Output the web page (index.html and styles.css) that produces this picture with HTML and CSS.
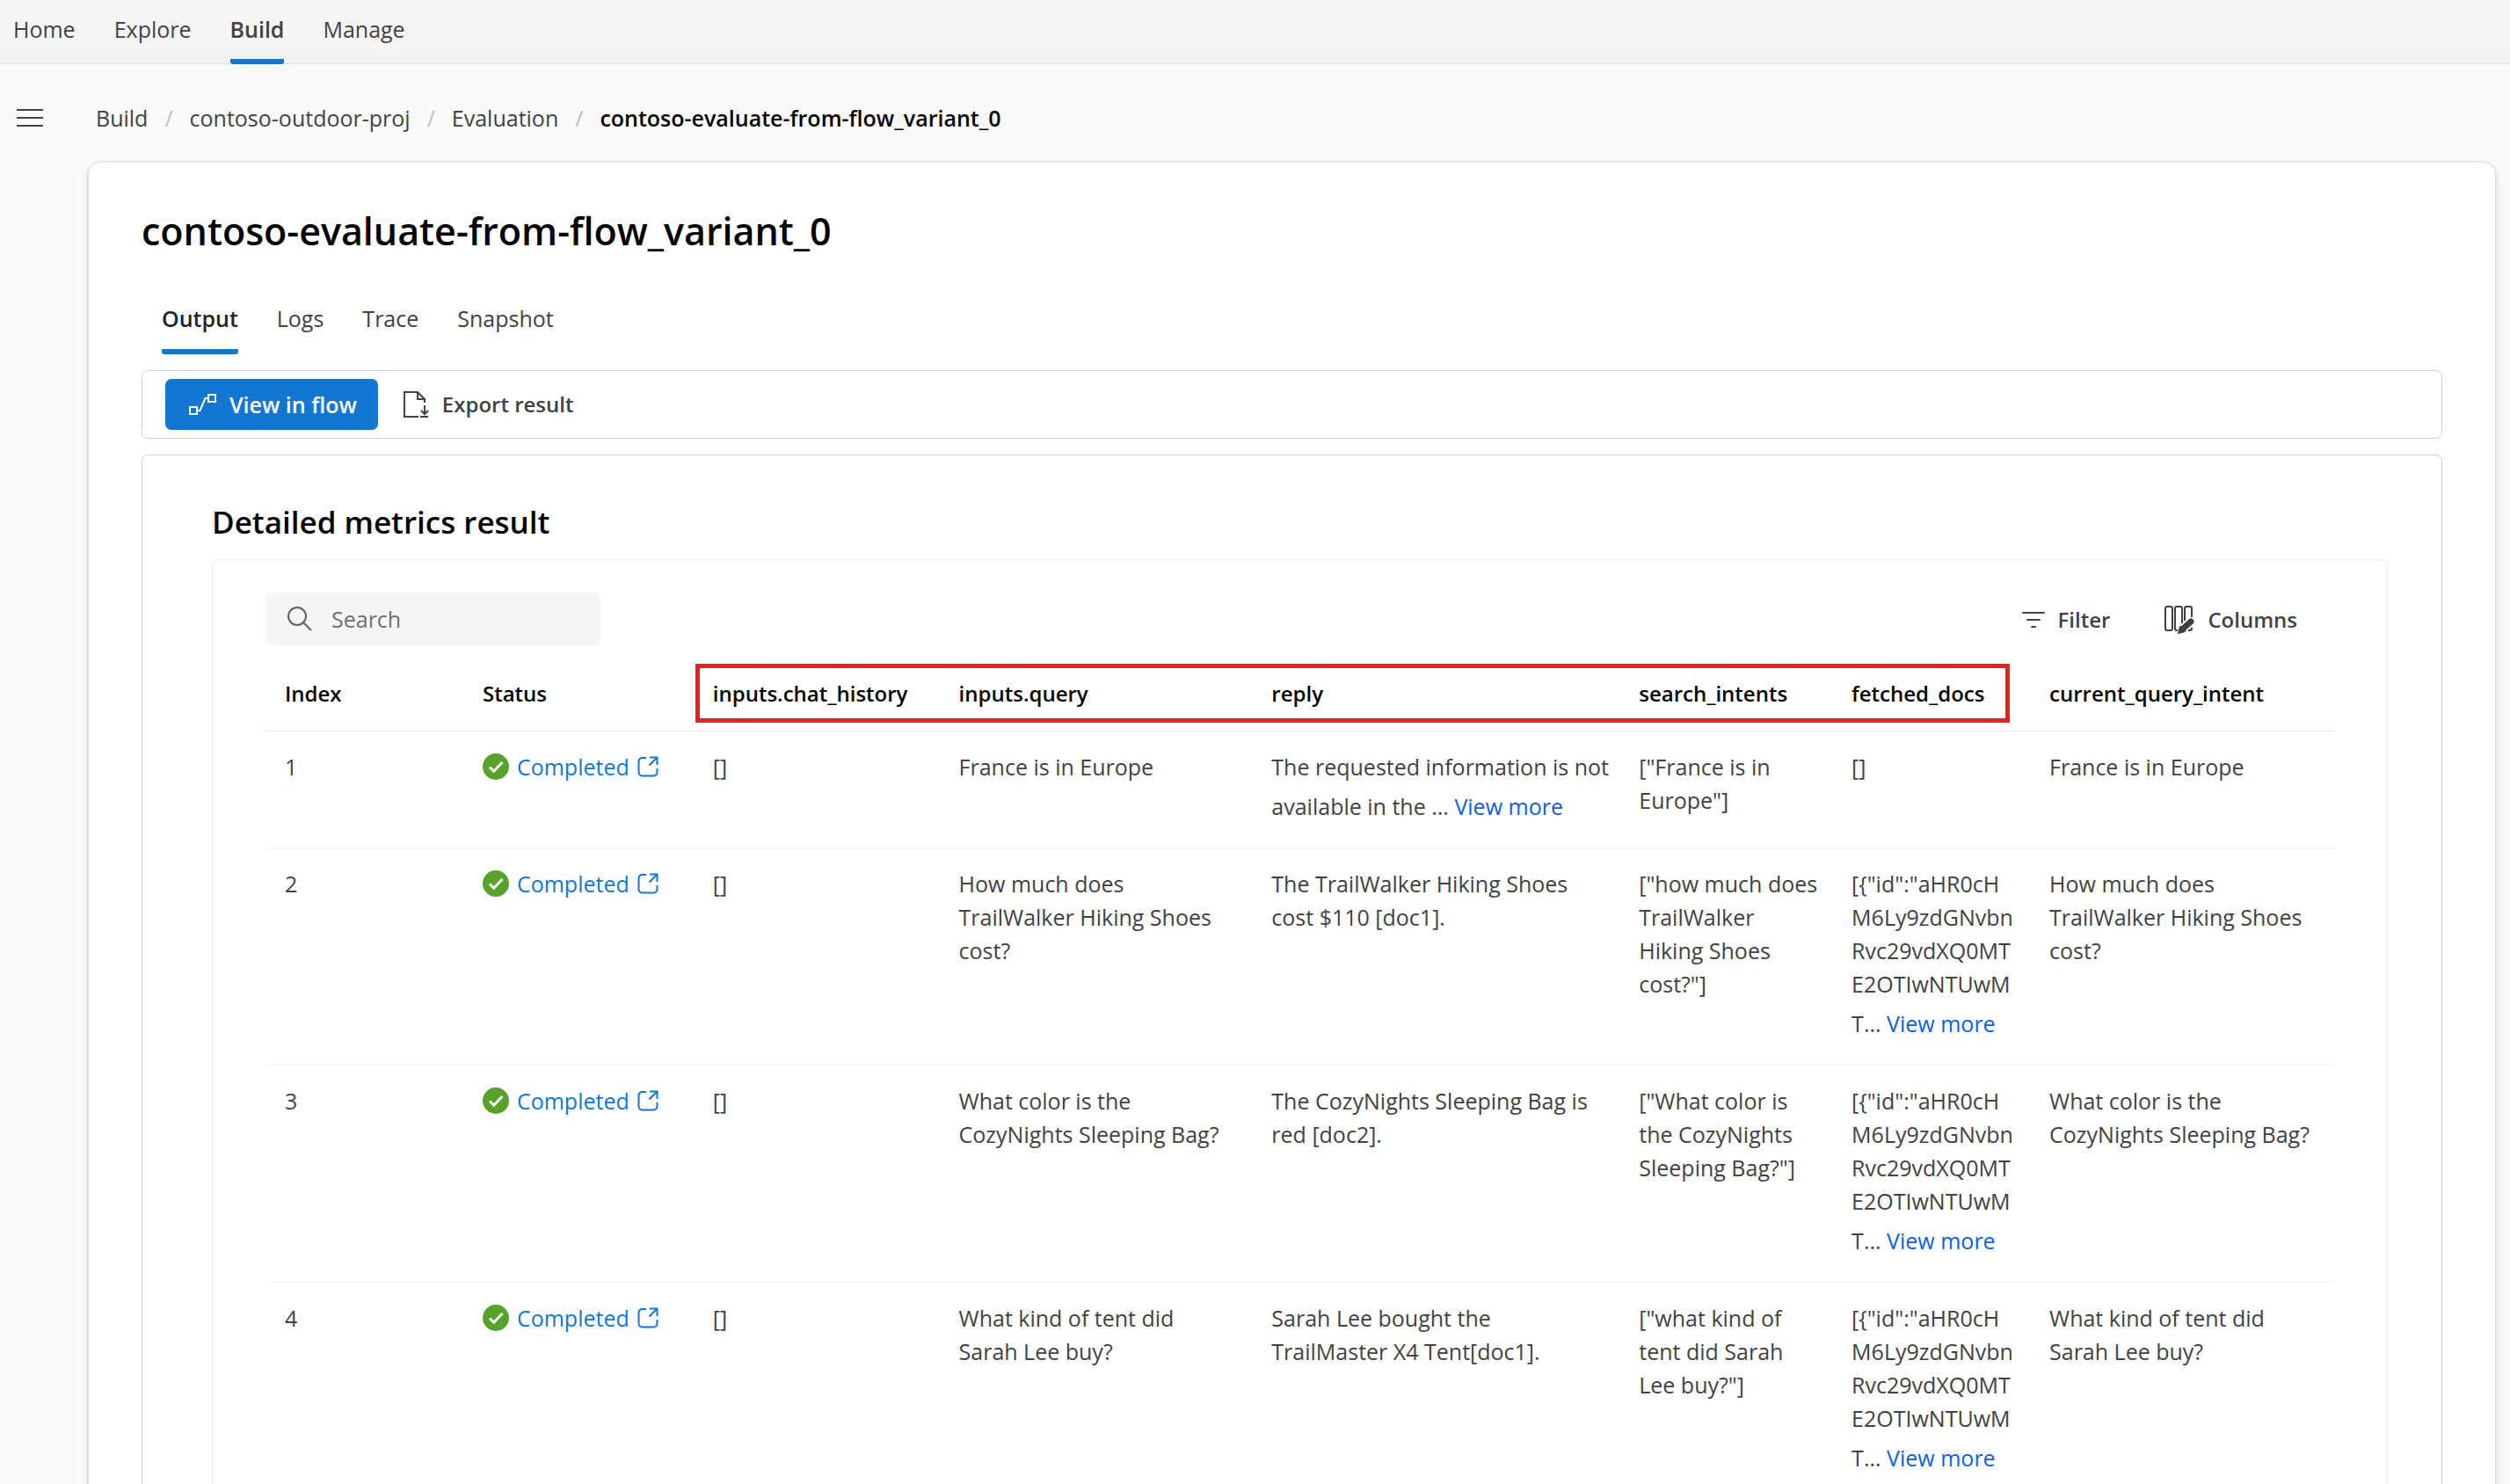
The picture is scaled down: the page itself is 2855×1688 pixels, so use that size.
FILE: index.html
```html
<!DOCTYPE html>
<html lang="en">
<head>
<meta charset="utf-8">
<title>contoso-evaluate-from-flow_variant_0</title>
<link rel="stylesheet" href="styles.css">
</head>
<body>
<svg class="sprite" aria-hidden="true">
  <symbol id="check" viewBox="0 0 30 30"><circle cx="15" cy="15" r="15" fill="#57a22b"/><path d="M8 15.5l4.7 4.7L22.500 10" fill="none" stroke="#fff" stroke-width="3"/></symbol>
  <symbol id="open" viewBox="0 0 24 24"><path d="M10 2H5.500A4 4 0 0 0 1.500 6v12.500a4 4 0 0 0 4 4h13a4 4 0 0 0 4-4V14M14 1.500h8.500V10M22.500 1.500L13.500 10.500" fill="none" stroke="currentColor" stroke-width="2"/></symbol>
</svg>
<div class="app">
  <header class="topbar">
    <nav class="topnav" aria-label="Main">
      <a href="#">Home</a>
      <a href="#">Explore</a>
      <a href="#" class="active">Build</a>
      <a href="#">Manage</a>
    </nav>
  </header>

  <div class="crumbbar">
    <button class="menu" aria-label="Menu"><svg width="30" height="22" viewBox="0 0 30 22"><path d="M0 2h30M0 11h30M0 20h30" stroke="#424242" stroke-width="2"/></svg></button>
    <nav class="crumbs" aria-label="Breadcrumb">
      <a href="#">Build</a><span class="slash">/</span>
      <a href="#">contoso-outdoor-proj</a><span class="slash">/</span>
      <a href="#">Evaluation</a><span class="slash">/</span>
      <strong>contoso-evaluate-from-flow_variant_0</strong>
    </nav>
  </div>

  <main class="card">
    <h1>contoso-evaluate-from-flow_variant_0</h1>
    <div class="tabs" role="tablist">
      <button role="tab" class="active" aria-selected="true">Output</button>
      <button role="tab">Logs</button>
      <button role="tab">Trace</button>
      <button role="tab">Snapshot</button>
    </div>

    <div class="toolbar">
      <button class="primary">
        <svg width="31" height="24" viewBox="0 0 31 24" fill="none" stroke="currentColor" stroke-width="2"><path d="M1 15h8v8H1zM22 1h8v8h-8zM9 19h3.500L18.500 5H22"/></svg>
        View in flow
      </button>
      <button class="plain">
        <svg width="30" height="32" viewBox="0 0 30 32" fill="none" stroke="currentColor" stroke-width="2"><path d="M18 30H2V2h15l8 8v4M17 2v8h8M25 17v10M21 23l4 4 4-4M20 30h9"/></svg>
        Export result
      </button>
    </div>

    <section class="results">
      <h2>Detailed metrics result</h2>
      <div class="panel">
        <div class="controls">
          <label class="search">
            <svg width="28" height="28" viewBox="0 0 28 28" fill="none" stroke="#616161" stroke-width="2"><circle cx="11" cy="11" r="10"/><path d="M18 18l9 9"/></svg>
            <input type="text" placeholder="Search" aria-label="Search">
          </label>
          <div class="actions">
            <button class="plain">
              <svg width="26" height="20" viewBox="0 0 26 20" stroke="currentColor" stroke-width="2" stroke-linecap="round"><path d="M1 2h24M6 10h14M11 18h4"/></svg>
              Filter
            </button>
            <button class="plain">
              <svg width="34" height="32" viewBox="0 0 34 32" fill="none" stroke="currentColor" stroke-width="2"><rect x="1" y="1" width="8" height="27" rx="2"/><path d="M15 28h-1a2 2 0 0 1-2-2V3a2 2 0 0 1 2-2h4a2 2 0 0 1 2 2v17M23 17V3a2 2 0 0 1 2-2h4a2 2 0 0 1 2 2v10M27 28h2a2 2 0 0 0 2-2v-1"/><path d="M20 27L30 18" stroke-width="7" stroke-linecap="round"/><path d="M16 31l2-7 5 5z" fill="currentColor" stroke-linejoin="round"/></svg>
              Columns
            </button>
          </div>
        </div>

        <div class="tablewrap">
          <table>
            <colgroup><col class="c-index"><col class="c-status"><col class="c-history"><col class="c-query"><col class="c-reply"><col class="c-intents"><col class="c-docs"><col class="c-current"></colgroup>
            <thead>
              <tr><th>Index</th><th>Status</th><th>inputs.chat_history</th><th>inputs.query</th><th>reply</th><th>search_intents</th><th>fetched_docs</th><th>current_query_intent</th></tr>
            </thead>
            <tbody>
              <tr>
                <td>1</td>
                <td><a href="#" class="status"><svg width="30" height="30"><use href="#check"/></svg>Completed<svg class="ext" width="24" height="24"><use href="#open"/></svg></a></td>
                <td>[]</td>
                <td>France is in Europe</td>
                <td>The requested information is not<div class="more">available in the ... <a href="#">View more</a></div></td>
                <td>["France is in<br>Europe"]</td>
                <td>[]</td>
                <td>France is in Europe</td>
              </tr>
              <tr>
                <td>2</td>
                <td><a href="#" class="status"><svg width="30" height="30"><use href="#check"/></svg>Completed<svg class="ext" width="24" height="24"><use href="#open"/></svg></a></td>
                <td>[]</td>
                <td>How much does<br>TrailWalker Hiking Shoes<br>cost?</td>
                <td>The TrailWalker Hiking Shoes<br>cost $110 [doc1].</td>
                <td>["how much does<br>TrailWalker<br>Hiking Shoes<br>cost?"]</td>
                <td>[{"id":"aHR0cH<br>M6Ly9zdGNvbn<br>Rvc29vdXQ0MT<br>E2OTIwNTUwM<div class="more">T... <a href="#">View more</a></div></td>
                <td>How much does<br>TrailWalker Hiking Shoes<br>cost?</td>
              </tr>
              <tr>
                <td>3</td>
                <td><a href="#" class="status"><svg width="30" height="30"><use href="#check"/></svg>Completed<svg class="ext" width="24" height="24"><use href="#open"/></svg></a></td>
                <td>[]</td>
                <td>What color is the<br>CozyNights Sleeping Bag?</td>
                <td>The CozyNights Sleeping Bag is<br>red [doc2].</td>
                <td>["What color is<br>the CozyNights<br>Sleeping Bag?"]</td>
                <td>[{"id":"aHR0cH<br>M6Ly9zdGNvbn<br>Rvc29vdXQ0MT<br>E2OTIwNTUwM<div class="more">T... <a href="#">View more</a></div></td>
                <td>What color is the<br>CozyNights Sleeping Bag?</td>
              </tr>
              <tr>
                <td>4</td>
                <td><a href="#" class="status"><svg width="30" height="30"><use href="#check"/></svg>Completed<svg class="ext" width="24" height="24"><use href="#open"/></svg></a></td>
                <td>[]</td>
                <td>What kind of tent did<br>Sarah Lee buy?</td>
                <td>Sarah Lee bought the<br>TrailMaster X4 Tent[doc1].</td>
                <td>["what kind of<br>tent did Sarah<br>Lee buy?"]</td>
                <td>[{"id":"aHR0cH<br>M6Ly9zdGNvbn<br>Rvc29vdXQ0MT<br>E2OTIwNTUwM<div class="more">T... <a href="#">View more</a></div></td>
                <td>What kind of tent did<br>Sarah Lee buy?</td>
              </tr>
            </tbody>
          </table>
          <div class="highlight"></div>
        </div>
      </div>
    </section>
  </main>
</div>
</body>
</html>
```

FILE: styles.css
```css
* { box-sizing: border-box; }
body { margin: 0; background: #fafafa; color: #424242; font: 25px/38px "Open Sans", "Noto Sans", sans-serif; }
a { color: inherit; text-decoration: none; }
button { border: 0; padding: 0; background: none; color: inherit; font: inherit; }
svg { display: block; flex: none; }
h1, h2 { margin: 0; color: #000; font-weight: 600; }
.sprite { position: absolute; width: 0; height: 0; }
.app { height: 100vh; overflow: hidden; }

.topbar { height: 73px; background: linear-gradient(#f5f5f5 75%, #f0f0f0); border-bottom: 1px solid #e0e0e0; }
.topnav { display: flex; gap: 44px; height: 73px; padding: 0 15px; }
.topnav a { padding-top: 14px; }
.active { font-weight: 600; }
.topnav .active, .tabs .active { background: linear-gradient(#1277d1, #1277d1) bottom / 100% 6px no-repeat; border-radius: 3px; }

.crumbbar { display: flex; align-items: center; gap: 60px; height: 112px; padding: 9px 19px 0; }
.crumbs { display: flex; gap: 19px; }
.slash { color: #bdbdbd; }
.crumbs strong { color: #000; font-weight: 600; }

.card { margin: 0 17px 0 101px; padding: 48px 60px 0; background: #fff; border-radius: 14px; box-shadow: 0 0 4px rgba(0,0,0,.14), 0 3px 8px rgba(0,0,0,.14); }
h1 { font-size: 43px; line-height: 60px; }
.tabs { display: flex; gap: 44px; height: 110px; padding: 44px 23px 0; }
.tabs button { height: 66px; padding: 6px 0 22px; }
.tabs .active { color: #242424; }

.toolbar { display: flex; align-items: center; gap: 28px; height: 78px; margin-top: 18px; padding: 0 26px; border: 1px solid #d1d1d1; border-radius: 7px; }
.primary, .plain { display: flex; align-items: center; gap: 15px; font-weight: 600; }
.plain { font-size: 24px; }
.primary { height: 58px; padding: 0 24px 0 27px; border-radius: 7px; background: #1277d1; color: #fff; }

.results { margin-top: 18px; padding: 50px 61px 40px 79px; border: 1px solid #d1d1d1; border-radius: 7px; }
h2 { font-size: 35px; line-height: 52px; }
.panel { margin-top: 16px; padding: 37px 60px 40px; border: 1px solid #ebebeb; border-radius: 7px; }
.controls { display: flex; justify-content: space-between; height: 72px; }
.search { display: flex; align-items: center; gap: 22px; width: 381px; height: 60px; padding: 0 25px; border-radius: 7px; background: #f5f5f5; }
.search input { width: 100%; border: 0; padding: 0; outline: 0; background: none; color: #424242; font: inherit; }
.search input::placeholder { color: #707070; opacity: 1; }
.actions { display: flex; gap: 62px; height: 62px; padding-right: 42px; }

.tablewrap { position: relative; }
table { width: 100%; table-layout: fixed; border-collapse: separate; border-spacing: 0; white-space: nowrap; }
th { height: 86px; padding: 0 0 0 22px; border-bottom: 1px solid #e6e6e6; color: #000; font-size: 24px; font-weight: 600; text-align: left; }
td { padding: 21px 0 21px 22px; border-bottom: 1px solid #f2f2f2; vertical-align: top; }
.c-index { width: 9.56%; }
.c-status { width: 11.13%; }
.c-history { width: 11.89%; }
.c-query { width: 15.12%; }
.c-reply { width: 17.76%; }
.c-intents { width: 10.28%; }
.c-docs { width: 9.56%; }
.c-current { width: 14.7%; }
.status { display: flex; align-items: center; gap: 9px; color: #1277d1; }
.more { line-height: 52px; }
.more a { color: #115ee0; }
.highlight { position: absolute; top: 9px; left: 20.8%; width: 63.5%; height: 67px; border: 5px solid #ed1c24; }
```
